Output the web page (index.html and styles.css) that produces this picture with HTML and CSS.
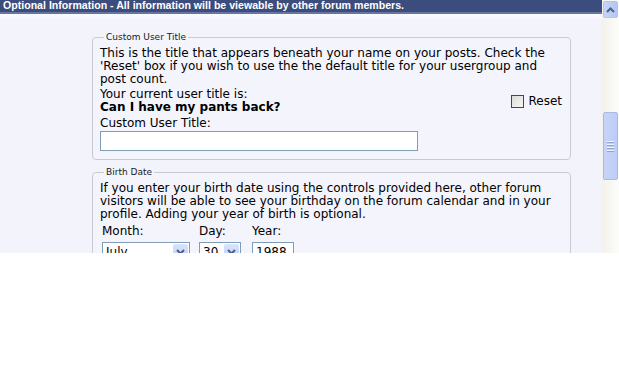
FILE: index.html
```html
<html>
	<head>
		<link rel="stylesheet" href="styles.css">
	</head>
	<body>
		<div id="window">
			<div id="page">
				<div class="header">Optional Information - All information will be viewable by other forum members.</div>
				<div class="content">
					<fieldset class="group">
						<legend>Custom User Title</legend>
						<div class="desc">This is the title that appears beneath your name on your posts. Check the 'Reset' box if you wish to use the the default title for your usergroup and post count.</div>
						<div class="row">
							<div class="current">
								<div>Your current user title is:</div>
								<div class="strong">Can I have my pants back?</div>
							</div>
							<label class="reset"><span class="check"></span>Reset</label>
						</div>
						<div class="label">Custom User Title:</div>
						<div class="textbox wide"></div>
					</fieldset>
					<fieldset class="group">
						<legend>Birth Date</legend>
						<div class="desc">If you enter your birth date using the controls provided here, other forum visitors will be able to see your birthday on the forum calendar and in your profile. Adding your year of birth is optional.</div>
						<div class="dates">
							<div class="field">
								<div class="label">Month:</div>
								<div class="select month"><span class="value">July</span><span class="drop"><svg width="9" height="6" viewBox="0 0 9 6"><path d="M1 1 L4.5 4.5 L8 1" fill="none" stroke="#4d6185" stroke-width="2"/></svg></span></div>
							</div>
							<div class="field">
								<div class="label">Day:</div>
								<div class="select day"><span class="value">30</span><span class="drop"><svg width="9" height="6" viewBox="0 0 9 6"><path d="M1 1 L4.5 4.5 L8 1" fill="none" stroke="#4d6185" stroke-width="2"/></svg></span></div>
							</div>
							<div class="field">
								<div class="label">Year:</div>
								<div class="textbox year">1988</div>
							</div>
						</div>
					</fieldset>
				</div>
			</div>
			<div id="scrollbar">
				<div class="arrow"><svg width="9" height="6" viewBox="0 0 9 6"><path d="M1 5 L4.5 1.5 L8 5" fill="none" stroke="#4d6185" stroke-width="2"/></svg></div>
				<div class="track">
					<div class="thumb"><span></span><span></span><span></span><span></span></div>
				</div>
			</div>
		</div>
	</body>
</html>
```

FILE: styles.css
```css
body {
	margin: 0;
	background-color: #fff;
	font-family: "DejaVu Sans", Verdana, sans-serif;
	font-size: 12px;
	color: #000;
}
#window {
	display: flex;
	height: 253px;
	overflow: hidden;
}
#page {
	flex: 1;
	overflow: hidden;
	background: linear-gradient(to right, #eeeff8 0, #f2f3fb 3px, #f2f3fb 575px, #fafaff 600px);
}
.header {
	height: 12px;
	line-height: 11px;
	padding-left: 3px;
	background-color: #3c4c7c;
	border-bottom: 2px solid #6676a4;
	color: #fff;
	font-family: "Liberation Sans", Arial, sans-serif;
	font-weight: bold;
	font-size: 10.6px;
	white-space: nowrap;
}
.content {
	padding: 18px 0 0 92px;
	background: linear-gradient(to bottom, #fbfbff 0, #f2f3fb 8px);
}
.group {
	width: 463px;
	margin: 0 0 7px 0;
	padding: 5px 7px 8px 7px;
	border: 1px solid #c9cad3;
	border-radius: 4px;
	background-color: #f4f4fc;
}
legend {
	margin-left: 4px;
	padding: 0 2px;
	font-size: 9px;
	color: #1a1a1a;
	line-height: 10px;
}
.desc {
	line-height: 13px;
}
.row {
	display: flex;
	justify-content: space-between;
	align-items: center;
	margin-top: 2px;
}
.current {
	line-height: 13px;
}
.strong {
	font-weight: bold;
}
.reset {
	display: flex;
	align-items: center;
	gap: 4px;
	margin-right: 1px;
}
.check {
	width: 11px;
	height: 11px;
	border: 1px solid #1c5180;
	background: linear-gradient(135deg, #dcdcd6, #f6f6f4);
}
.label {
	line-height: 13px;
	margin-top: 3px;
}
.textbox {
	box-sizing: border-box;
	height: 20px;
	margin-top: 1px;
	border: 1px solid #7f9db9;
	background-color: #fff;
	padding: 2px 3px;
	line-height: 14px;
}
.wide {
	width: 318px;
}
.dates {
	display: flex;
	margin-top: 4px;
}
.field {
	margin-left: 2px;
}
.field + .field {
	margin-left: 9px;
}
.field:last-child {
	margin-left: 11px;
}
.field .label {
	margin-top: 0;
	padding-bottom: 4px;
}
.select {
	box-sizing: border-box;
	display: flex;
	height: 20px;
	border: 1px solid #7f9db9;
	background-color: #fff;
}
.select .value {
	flex: 1;
	padding: 2px 3px;
	line-height: 14px;
}
.drop {
	width: 15px;
	margin: 1px;
	display: flex;
	align-items: center;
	justify-content: center;
	background: linear-gradient(#d9e4fd, #bccdf6);
	border-radius: 2px;
}
.month {
	width: 88px;
}
.day {
	width: 42px;
}
.year {
	width: 42px;
	margin-top: 0;
}
#scrollbar {
	width: 17px;
	display: flex;
	flex-direction: column;
	background: linear-gradient(to right, #f2f1ea, #fdfdfa);
}
.arrow {
	box-sizing: border-box;
	height: 17px;
	margin: 1px;
	display: flex;
	align-items: center;
	justify-content: center;
	background: linear-gradient(to right, #c7d5f7, #b4c7f2);
	border: 1px solid #b4c5ed;
	border-radius: 2px;
}
.track {
	flex: 1;
	padding-top: 93px;
}
.thumb {
	box-sizing: border-box;
	height: 68px;
	margin: 0 1px;
	border: 1px solid #a7b9e6;
	border-radius: 2px;
	background: linear-gradient(to right, #c6d4f7, #bccdf6);
	display: flex;
	flex-direction: column;
	align-items: center;
	justify-content: center;
	gap: 1px;
}
.thumb span {
	width: 7px;
	height: 1px;
	background-color: #eef3ff;
	border-bottom: 1px solid #8da3d8;
}
```
